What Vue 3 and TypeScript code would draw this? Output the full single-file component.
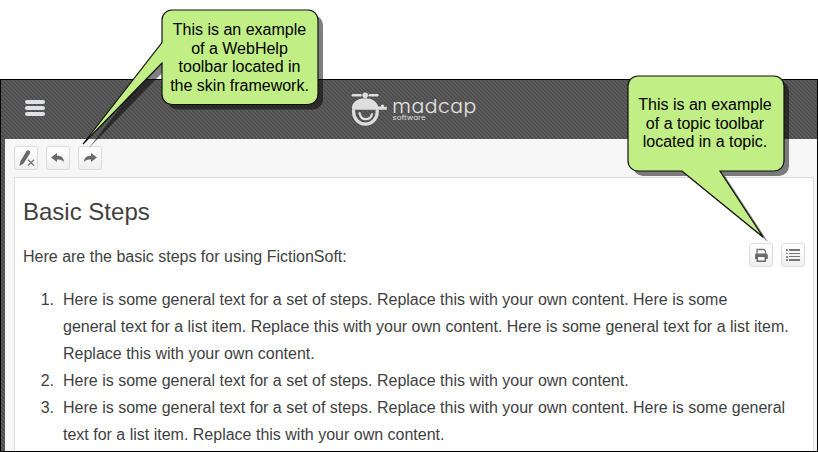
<script setup lang="ts">
const steps: string[][] = [
  [
    'Here is some general text for a set of steps. Replace this with your own content. Here is some',
    'general text for a list item. Replace this with your own content. Here is some general text for a list item.',
    'Replace this with your own content.',
  ],
  ['Here is some general text for a set of steps. Replace this with your own content.'],
  [
    'Here is some general text for a set of steps. Replace this with your own content. Here is some general',
    'text for a list item. Replace this with your own content.',
  ],
]
const skinNote: string[] = ['This is an example', 'of a WebHelp', 'toolbar located in', 'the skin framework.']
const topicNote: string[] = ['This is an example', 'of a topic toolbar', 'located in a topic.']
</script>

<template>
  <div class="page">
    <div class="window">
      <header class="banner">
        <div class="menu"><span></span><span></span><span></span></div>
        <div class="brand">
          <svg class="mark" width="37" height="36" viewBox="0 0 37 36">
            <g fill="#dedede">
              <rect x="0.700" y="2" width="10" height="2.400" rx="1.200" />
              <rect x="17.500" y="2" width="10" height="2.400" rx="1.200" />
              <circle cx="14.200" cy="3.200" r="2.800" />
              <path d="M1 15C2 9.500 7.500 6.200 14.200 6.200S26 9.500 27.300 14.500H30V13.500A1.600 1.600 0 0 1 33 13.500V14.800H35.800V17.800H1Z" />
            </g>
            <path d="M2.600 17.500V20a11.800 12.200 0 0 0 23.600 0V17.500" fill="none" stroke="#dedede" stroke-width="3.200" />
            <path d="M8.600 21.200c.6 3.600 3 5.900 6.200 5.900s5.500-2 6.200-4.900" fill="none" stroke="#dedede" stroke-width="2.200" stroke-linecap="round" />
          </svg>
          <svg class="wordmark" width="90" height="40" viewBox="0 0 90 40">
            <text x="0" y="21" textLength="84.500" lengthAdjust="spacingAndGlyphs" class="name">madcap</text>
            <text x="0.500" y="28.300" textLength="33" lengthAdjust="spacingAndGlyphs" class="sub">software</text>
          </svg>
        </div>
      </header>
      <main class="body">
        <div class="toolbar">
          <button class="tool">
            <svg width="22" height="22" viewBox="0 0 22 22">
              <path d="M11.500 4L13.300 3l1.900 1.400-.6 2.600L8.500 16.500 4.500 19 5.300 14.500Z" fill="#6a6a6a" />
              <path d="M13 12.800l6 5.700M19 12.800l-6 5.700" stroke="#777" stroke-width="1.300" />
            </svg>
          </button>
          <button class="tool">
            <svg width="22" height="22" viewBox="0 0 22 22">
              <path d="M4 10.500L10 6v2.700c4.500 0 7 2 6.800 6.300-1.500-2-3.500-2.400-6.800-2.400V15Z" fill="#6a6a6a" />
            </svg>
          </button>
          <button class="tool">
            <svg width="22" height="22" viewBox="0 0 22 22">
              <path d="M18 10.500L12 6v2.700c-4.500 0-7 2-6.800 6.300 1.500-2 3.500-2.400 6.800-2.400V15Z" fill="#6a6a6a" />
            </svg>
          </button>
        </div>
        <article class="topic">
          <h1>Basic Steps</h1>
          <div class="intro">
            <p>Here are the basic steps for using FictionSoft:</p>
            <div class="tools">
              <button class="tool">
                <svg width="22" height="22" viewBox="0 0 22 22">
                  <path d="M7 10V5.500h7l1.500 1.500v3" fill="none" stroke="#777" stroke-width="1.300" />
                  <path d="M6.500 9.500h9.500a1.800 1.800 0 0 1 1.800 1.800V15H15.500v-2H7v2H5v-3.700A1.700 1.700 0 0 1 6.500 9.500Z" fill="#6a6a6a" />
                  <path d="M7.300 13v4.300h8V13" fill="none" stroke="#6a6a6a" stroke-width="1.500" />
                </svg>
              </button>
              <button class="tool">
                <svg width="22" height="22" viewBox="0 0 22 22" shape-rendering="crispEdges">
                  <path d="M4 5h2v2H4zM4 9h2v1H4zM4 12h2v2H4zM4 15h2v2H4z" fill="#888" />
                  <path d="M7 5h11v2H7zM7 9h11v1H7zM7 12h11v1H7zM7 15h11v2H7z" fill="#777" />
                </svg>
              </button>
            </div>
          </div>
          <ol>
            <li v-for="(step, i) in steps" :key="i">
              <span class="number">{{ i + 1 }}.</span>
              <div>
                <div v-for="line in step" :key="line" class="line">{{ line }}</div>
              </div>
            </li>
          </ol>
        </article>
      </main>
    </div>

    <svg class="overlay" width="818" height="452" viewBox="0 0 818 452">
      <defs>
        <path id="skin-shape" d="M172 10H308A10 10 0 0 1 318 20V94.500A10 10 0 0 1 308 104.500H172A10 10 0 0 1 162 94.500V63L83 144L162 42.500V20A10 10 0 0 1 172 10Z" />
        <path id="topic-shape" d="M638 76H774A10 10 0 0 1 784 86V161A10 10 0 0 1 774 171H720L763 237L682 171H638A10 10 0 0 1 628 161V86A10 10 0 0 1 638 76Z" />
      </defs>
      <use href="#skin-shape" x="5" y="5" fill="#000" fill-opacity=".5" />
      <use href="#skin-shape" fill="#c1ee85" stroke="#111" stroke-width="1.200" />
      <use href="#topic-shape" x="5" y="5" fill="#000" fill-opacity=".5" />
      <use href="#topic-shape" fill="#c1ee85" stroke="#111" stroke-width="1.200" />
    </svg>
    <div class="note skin-note"><div v-for="line in skinNote" :key="line">{{ line }}</div></div>
    <div class="note topic-note"><div v-for="line in topicNote" :key="line">{{ line }}</div></div>
  </div>
</template>

<style>
body { background: #fff; overflow: hidden; }
</style>

<style scoped>
.page {
  position: relative;
  box-sizing: border-box;
  width: 818px;
  height: 452px;
  padding-top: 79px;
  font-family: "Liberation Sans", Arial, sans-serif;
  color: #3f3f3f;
}
.window {
  box-sizing: border-box;
  height: 373px;
  border: 1px solid #000;
  padding-left: 4px;
  display: flex;
  flex-direction: column;
  overflow: hidden;
  background: repeating-linear-gradient(45deg, #484848 0, #626262 1.414px, #484848 2.828px);
}
.banner { flex: 0 0 59px; display: flex; }
.menu { display: flex; flex-direction: column; gap: 2px; padding: 20px 0 0 20px; }
.menu span { width: 20px; height: 4px; border-radius: 2px; background: #dfe0e6; }
.brand { display: flex; gap: 4px; padding: 12px 0 0 306px; }
.brand svg { flex: none; }
.name { font-family: Inter, sans-serif; font-size: 19px; font-weight: 300; font-feature-settings: "cv11", "ss03"; fill: #e2e2e2; }
.sub { font-family: Inter, sans-serif; font-size: 7px; font-feature-settings: "cv11"; fill: #dedede; }
.body {
  flex: 1;
  min-height: 0;
  background: #f6f6f6;
  padding: 7px 3px 0 9px;
  display: flex;
  flex-direction: column;
}
.toolbar { display: flex; gap: 8px; flex: 0 0 31px; align-items: flex-start; }
.tool {
  box-sizing: border-box;
  width: 24px;
  height: 24px;
  margin: 0;
  padding: 0;
  border: 1px solid #ddd;
  border-radius: 3px;
  background: linear-gradient(#fff, #efefef);
}
.tool svg { display: block; }
.topic {
  flex: 1;
  min-height: 0;
  background: #fff;
  border: 1px solid #ddd;
  border-bottom: 0;
  padding: 16px 8px 0;
}
h1 { margin: 0; font-size: 24px; line-height: 36px; font-weight: 400; }
.intro { display: flex; justify-content: space-between; padding-top: 13px; height: 27px; }
.intro p { margin: 0; font-size: 16px; line-height: 27px; }
.tools { display: flex; gap: 8px; }
ol { list-style: none; margin: 16px 0 0; padding: 0; font-size: 16px; line-height: 27px; }
li { display: flex; }
.number { flex: 0 0 31px; margin-right: 9px; text-align: right; }
.line { white-space: nowrap; }
.overlay { position: absolute; left: 0; top: 0; }
.note { position: absolute; color: #000; font-size: 16px; line-height: 18.500px; text-align: center; white-space: nowrap; }
.skin-note { left: 162px; top: 21px; width: 155px; }
.topic-note { left: 627px; top: 96px; width: 156px; }
</style>
